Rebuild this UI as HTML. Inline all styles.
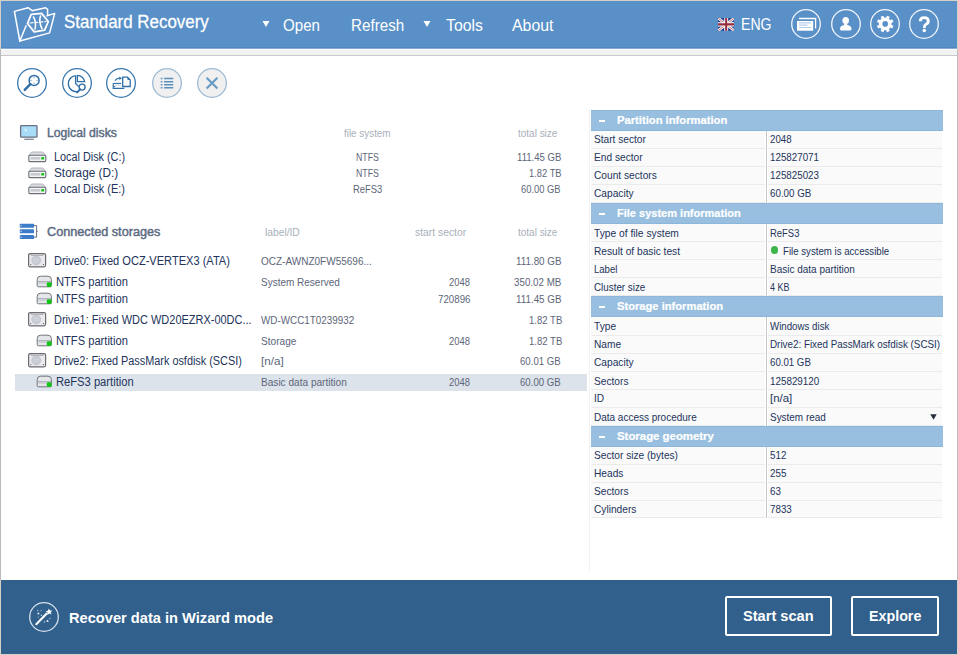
<!DOCTYPE html>
<html><head><meta charset="utf-8"><style>
html,body{margin:0;padding:0;width:958px;height:655px;overflow:hidden;background:#fff}
body{position:relative;font-family:"Liberation Sans", sans-serif}
.t{position:absolute;line-height:20px;white-space:nowrap}
.r{position:absolute}
</style></head><body>
<div class="r" style="left:0px;top:0px;width:958px;height:655px;background:#ffffff;"></div>
<div class="r" style="left:1px;top:1px;width:956px;height:46px;background:#5990c8;"></div>
<div class="r" style="left:1px;top:47px;width:956px;height:1px;background:#4d88c5;"></div>
<div class="r" style="left:1px;top:48px;width:956px;height:1px;background:#86acd8;"></div>
<div class="r" style="left:1px;top:49px;width:956px;height:1px;background:#ffffff;"></div>
<div class="r" style="left:1px;top:50px;width:956px;height:5px;background:#f2f2f2;"></div>
<div class="r" style="left:1px;top:55px;width:956px;height:1px;background:#c9c9c9;"></div>
<svg class="r" style="left:0;top:0" width="70" height="48" viewBox="0 0 70 48">
<g fill="none" stroke="#fff" stroke-width="1.5" stroke-linejoin="round" stroke-linecap="round">
<path d="M19.8 41 L14.4 11.4 L28.1 7.7 L32.2 10.7 L45.6 7.7 L47.6 9.4 L47.6 15.1"/>
<path d="M19.8 41 L26.1 25.8"/>
<path d="M19.8 41 L49.6 32.9 L54.7 13.4 L47 15.8"/>
<path d="M27.5 23.5 L31.2 14.4 L41.6 13.4 L48.3 21.5 L44.6 30.2 L34.2 31.9 Z" stroke-width="1.8"/>
<path d="M33.5 17 Q36.5 22 35 29" stroke-width="1.6"/>
<path d="M40.5 16 Q38.5 22 42 28.5" stroke-width="1.6"/>
<path d="M30 23 L46 21.5" stroke-width="1.2" stroke-dasharray="3 2"/>
</g></svg>
<div class="t" style="left:63.70px;top:13px;font-size:17.0px;color:#ffffff;transform:scale(0.9952,1.0500);transform-origin:0 15px;-webkit-text-stroke:0.25px #fff;">Standard Recovery</div>
<svg class="r" style="left:261.5px;top:19.5px" width="8" height="8" viewBox="0 0 8 8"><path d="M0.5 1 L7.5 1 L4 7 Z" fill="#fff"/></svg>
<div class="t" style="left:283.40px;top:16px;font-size:15.5px;color:#ffffff;transform:scale(0.9737,1.1000);transform-origin:0 15px;">Open</div>
<div class="t" style="left:351.30px;top:16px;font-size:15.5px;color:#ffffff;transform:scale(0.9796,1.1000);transform-origin:0 15px;">Refresh</div>
<svg class="r" style="left:423px;top:19.5px" width="8" height="8" viewBox="0 0 8 8"><path d="M0.5 1 L7.5 1 L4 7 Z" fill="#fff"/></svg>
<div class="t" style="left:445.80px;top:16px;font-size:15.5px;color:#ffffff;transform:scale(1.0194,1.1000);transform-origin:0 15px;">Tools</div>
<div class="t" style="left:511.70px;top:16px;font-size:15.5px;color:#ffffff;transform:scale(1.0244,1.1000);transform-origin:0 15px;">About</div>
<svg class="r" style="left:717.8px;top:17.8px" width="16.4" height="12.8" viewBox="0 0 16 12" preserveAspectRatio="none">
<rect width="16" height="12" fill="#213f8e"/>
<path d="M0 0 L16 12 M16 0 L0 12" stroke="#f4f0ee" stroke-width="2.6"/>
<path d="M0 0 L16 12 M16 0 L0 12" stroke="#c8707a" stroke-width="0.9"/>
<path d="M8 0 V12 M0 6 H16" stroke="#fff" stroke-width="3.8"/>
<path d="M8 0 V12 M0 6 H16" stroke="#952c3c" stroke-width="2"/>
</svg>
<div class="t" style="left:741.00px;top:15px;font-size:15.5px;color:#ffffff;transform:scale(0.9088,1.1000);transform-origin:0 15px;">ENG</div>
<svg class="r" style="left:790px;top:8px" width="32" height="32" viewBox="0 0 32 32"><circle cx="16" cy="16" r="14.3" fill="none" stroke="#f2f6fb" stroke-width="1.3"/><path d="M9 10.5 H25.6 V20.5" fill="none" stroke="#fff" stroke-width="1.3"/><rect x="7" y="13" width="16.2" height="9.7" fill="#fff"/><path d="M9 14.9 H21 M9 17.1 H17.5 M9 19.5 H21" stroke="#b5cfea" stroke-width="1.1"/></svg>
<svg class="r" style="left:830px;top:8px" width="32" height="32" viewBox="0 0 32 32"><circle cx="16" cy="16" r="14.3" fill="none" stroke="#f2f6fb" stroke-width="1.3"/><ellipse cx="15.7" cy="12.5" rx="3.3" ry="3.6" fill="#fff"/><path d="M14.2 15.5 H17.2 V17 Q21.5 17.5 21.5 21 Q21.5 22.5 20 22.5 H11.5 Q10 22.5 10 21 Q10 17.5 14.2 17 Z" fill="#fff"/></svg>
<svg class="r" style="left:869px;top:8px" width="32" height="32" viewBox="0 0 32 32"><circle cx="16" cy="16" r="14.3" fill="none" stroke="#f2f6fb" stroke-width="1.3"/><circle cx="16.2" cy="15.9" r="6.3" fill="#fff"/><rect x="14.7" y="7.6" width="3" height="16.6" transform="rotate(22.5 16.2 15.9)" fill="#fff"/><rect x="14.7" y="7.6" width="3" height="16.6" transform="rotate(67.5 16.2 15.9)" fill="#fff"/><rect x="14.7" y="7.6" width="3" height="16.6" transform="rotate(112.5 16.2 15.9)" fill="#fff"/><rect x="14.7" y="7.6" width="3" height="16.6" transform="rotate(157.5 16.2 15.9)" fill="#fff"/><circle cx="16.2" cy="15.9" r="2.8" fill="#5990c8"/></svg>
<svg class="r" style="left:908px;top:8px" width="32" height="32" viewBox="0 0 32 32"><circle cx="16" cy="16" r="14.3" fill="none" stroke="#f2f6fb" stroke-width="1.3"/><path d="M12.3 13.2 Q12.3 9.6 16.2 9.6 Q20.3 9.6 20.3 13 Q20.3 15.2 18 16.3 Q16.4 17.1 16.4 19.3 V20" fill="none" stroke="#fff" stroke-width="2.9"/><circle cx="16.3" cy="22.6" r="1.75" fill="#fff"/></svg>
<svg class="r" style="left:15.850000000000001px;top:67px" width="32" height="32" viewBox="0 0 32 32"><circle cx="16" cy="16" r="14.35" fill="none" stroke="#3a78ae" stroke-width="1.3"/><circle cx="18.1" cy="13.4" r="5" fill="none" stroke="#2f6ea7" stroke-width="1.5"/><path d="M14.3 17.2 L8.75 22.9" stroke="#2f6ea7" stroke-width="2.4" stroke-linecap="round"/><path d="M18.1 9.6 v1.6 M18.1 15.6 v1.6 M14.3 13.4 h1.6 M20.3 13.4 h1.6" stroke="#7ea7cc" stroke-width="0.9"/></svg>
<svg class="r" style="left:60.900000000000006px;top:66.9px" width="32" height="32" viewBox="0 0 32 32"><circle cx="16" cy="16" r="14.35" fill="none" stroke="#3a78ae" stroke-width="1.3"/><path d="M14.6 8.6 A8 8 0 1 0 16.2 24.7" fill="none" stroke="#2f6ea7" stroke-width="1.4"/><path d="M14.6 8.6 V16.5 L17.6 19.6" fill="none" stroke="#2f6ea7" stroke-width="1.3"/><path d="M16.4 8.4 V14.6 H23.6 A7.2 7.2 0 0 0 16.4 8.4 Z" fill="none" stroke="#2f6ea7" stroke-width="1.3"/><circle cx="21.1" cy="20.1" r="3" fill="none" stroke="#2f6ea7" stroke-width="1.4"/><path d="M19 22.3 L16.2 25.4" stroke="#2f6ea7" stroke-width="2" stroke-linecap="round"/></svg>
<svg class="r" style="left:105.4px;top:67px" width="32" height="32" viewBox="0 0 32 32"><circle cx="16" cy="16" r="14.35" fill="none" stroke="#3a78ae" stroke-width="1.3"/><path d="M17.7 10.2 H22.5 L25.2 12.9 V19.5 H17.7 Z" fill="none" stroke="#2f6ea7" stroke-width="1.3"/><path d="M22.5 10.2 V12.9 H25.2 Z" fill="#2f6ea7"/><path d="M10 13.6 Q11.5 11.3 14.8 11.2" fill="none" stroke="#2f6ea7" stroke-width="1.2"/><path d="M14.3 9.4 L17 11.2 L14.3 12.9 Z" fill="#2f6ea7"/><path d="M8.2 16.4 H16.2" stroke="#2f6ea7" stroke-width="1.1"/><path d="M10.5 18.2 H16" stroke="#8db3d6" stroke-width="1" stroke-dasharray="1.2 0.8"/><path d="M8.2 16.4 V21.4 H19.3" fill="none" stroke="#2f6ea7" stroke-width="1.2"/><path d="M8.8 18.6 L10.6 19.6 L8.8 20.6 Z" fill="#2f6ea7"/></svg>
<svg class="r" style="left:150.5px;top:66.9px" width="32" height="32" viewBox="0 0 32 32"><circle cx="16" cy="16" r="14.35" fill="#f0f0f0" stroke="#9dbad3" stroke-width="1.3"/><path d="M13.1 11.5 H22.25 M13.1 14.7 H22.25 M13.1 17.75 H22.25 M13.1 20.8 H22.25" stroke="#5a8fbc" stroke-width="1.6"/><path d="M9.75 11.5 H11.4 M9.75 14.7 H11.4 M9.75 17.75 H11.4 M9.75 20.8 H11.4" stroke="#5a8fbc" stroke-width="1.6"/></svg>
<svg class="r" style="left:195.5px;top:67px" width="32" height="32" viewBox="0 0 32 32"><circle cx="16" cy="16" r="14.35" fill="#f0f0f0" stroke="#9dbad3" stroke-width="1.3"/><path d="M10.6 10.8 L21.4 21.5 M21.4 10.8 L10.6 21.5" stroke="#6a9cc4" stroke-width="2.3"/></svg>
<svg class="r" style="left:19px;top:124px" width="20" height="17" viewBox="0 0 20 17">
<rect x="1.6" y="1.6" width="16.4" height="11.6" rx="0.8" fill="#a9dcf8" stroke="#6b7180" stroke-width="1.3"/>
<path d="M5.3 4.2 L8.3 6.6 L6.6 7 L7 8.6 Z" fill="#ffffff"/>
<rect x="5.3" y="14.6" width="9.6" height="1.4" fill="#8a909a"/>
</svg>
<div class="t" style="left:47.25px;top:123px;font-size:12.5px;color:#5b6b82;transform:scale(0.9764,1.0000);transform-origin:0 14px;-webkit-text-stroke:0.45px #5b6b82;">Logical disks</div>
<div class="t" style="left:344.40px;top:123px;font-size:11.0px;color:#a9b0ba;transform:scale(0.8962,1.0000);transform-origin:0 14px;">file system</div>
<div class="t" style="left:518.30px;top:123px;font-size:11.0px;color:#a9b0ba;transform:scale(0.9070,1.0000);transform-origin:0 14px;">total size</div>
<svg class="r" style="left:27.5px;top:150.5px" width="19" height="12" viewBox="0 0 19 12">
<path d="M3.6 1 H14.8 L17.8 4.4 H0.8 Z" fill="#dcdde2" stroke="#a3a7ad" stroke-width="0.8"/>
<rect x="0.8" y="4.2" width="17" height="6.4" rx="1" fill="#f3f3f5" stroke="#6c7077" stroke-width="1.1"/>
<rect x="2.6" y="6" width="9.6" height="2.6" fill="#c6cad1"/>
<rect x="13.2" y="6" width="3" height="2.5" fill="#1ec81e"/>
</svg>
<div class="t" style="left:53.80px;top:147px;font-size:12.0px;color:#23345c;transform:scale(0.9025,1.0000);transform-origin:0 14px;">Local Disk (C:)</div>
<div class="t" style="left:356.00px;top:147px;font-size:11.0px;color:#5d6679;transform:scale(0.8000,1.0000);transform-origin:0 14px;">NTFS</div>
<div class="t" style="left:516.50px;top:147px;font-size:11.0px;color:#5d6679;transform:scale(0.8725,1.0000);transform-origin:0 14px;">111.45 GB</div>
<svg class="r" style="left:27.5px;top:166.5px" width="19" height="12" viewBox="0 0 19 12">
<path d="M3.6 1 H14.8 L17.8 4.4 H0.8 Z" fill="#dcdde2" stroke="#a3a7ad" stroke-width="0.8"/>
<rect x="0.8" y="4.2" width="17" height="6.4" rx="1" fill="#f3f3f5" stroke="#6c7077" stroke-width="1.1"/>
<rect x="2.6" y="6" width="9.6" height="2.6" fill="#c6cad1"/>
<rect x="13.2" y="6" width="3" height="2.5" fill="#1ec81e"/>
</svg>
<div class="t" style="left:53.80px;top:163px;font-size:12.0px;color:#23345c;transform:scale(0.9815,1.0000);transform-origin:0 14px;">Storage (D:)</div>
<div class="t" style="left:356.00px;top:163px;font-size:11.0px;color:#5d6679;transform:scale(0.8000,1.0000);transform-origin:0 14px;">NTFS</div>
<div class="t" style="left:528.70px;top:163px;font-size:11.0px;color:#5d6679;transform:scale(0.8500,1.0000);transform-origin:0 14px;">1.82 TB</div>
<svg class="r" style="left:27.5px;top:182.5px" width="19" height="12" viewBox="0 0 19 12">
<path d="M3.6 1 H14.8 L17.8 4.4 H0.8 Z" fill="#dcdde2" stroke="#a3a7ad" stroke-width="0.8"/>
<rect x="0.8" y="4.2" width="17" height="6.4" rx="1" fill="#f3f3f5" stroke="#6c7077" stroke-width="1.1"/>
<rect x="2.6" y="6" width="9.6" height="2.6" fill="#c6cad1"/>
<rect x="13.2" y="6" width="3" height="2.5" fill="#1ec81e"/>
</svg>
<div class="t" style="left:53.80px;top:179px;font-size:12.0px;color:#23345c;transform:scale(0.9090,1.0000);transform-origin:0 14px;">Local Disk (E:)</div>
<div class="t" style="left:353.05px;top:179px;font-size:11.0px;color:#5d6679;transform:scale(0.8559,1.0000);transform-origin:0 14px;">ReFS3</div>
<div class="t" style="left:521.00px;top:179px;font-size:11.0px;color:#5d6679;transform:scale(0.8511,1.0000);transform-origin:0 14px;">60.00 GB</div>
<svg class="r" style="left:18px;top:222px" width="22" height="19" viewBox="0 0 22 19">
<rect x="1.75" y="1.75" width="14.3" height="4" rx="0.8" fill="#3d7cc8"/>
<rect x="1.75" y="7.3" width="14.3" height="4" rx="0.8" fill="#3d7cc8"/>
<rect x="1.75" y="13.1" width="14.3" height="3.9" rx="0.8" fill="#3d7cc8"/>
<path d="M2.6 3.75 h1 M2.6 9.3 h1 M2.6 15.05 h1" stroke="#e6f0fa" stroke-width="1.2"/>
<path d="M16 3.6 H18.6 V15.2 H16 M18.6 9.3 H19.8" fill="none" stroke="#6f6f80" stroke-width="1"/>
</svg>
<div class="t" style="left:47.00px;top:222px;font-size:12.5px;color:#5b6b82;transform:scale(1.0133,1.0000);transform-origin:0 14px;-webkit-text-stroke:0.45px #5b6b82;">Connected storages</div>
<div class="t" style="left:265.00px;top:222px;font-size:11.0px;color:#a9b0ba;transform:scale(0.9324,1.0000);transform-origin:0 14px;">label/ID</div>
<div class="t" style="left:415.00px;top:222px;font-size:11.0px;color:#a9b0ba;transform:scale(0.9400,1.0000);transform-origin:0 14px;">start sector</div>
<div class="t" style="left:518.30px;top:222px;font-size:11.0px;color:#a9b0ba;transform:scale(0.9070,1.0000);transform-origin:0 14px;">total size</div>
<div class="r" style="left:15px;top:374px;width:572px;height:17px;background:#dce3eb;"></div>
<div class="r" style="left:15px;top:375px;width:572px;height:1px;background:repeating-linear-gradient(90deg,#cdd6e0 0 1px,transparent 1px 4px)"></div>
<svg class="r" style="left:27px;top:252px" width="20" height="16" viewBox="0 0 20 16">
<rect x="1.6" y="1.6" width="17" height="13.2" rx="1.5" fill="#eaeaee" stroke="#6c6c70" stroke-width="1.2"/>
<path d="M4.2 2 V3.4 H16 V2" fill="none" stroke="#9a9aa0" stroke-width="0.8"/>
<circle cx="9.2" cy="8.4" r="4.5" fill="#c8ccd5" stroke="#b4b8c2" stroke-width="0.6"/>
<path d="M6.5 7.5 H12 M6.2 9.2 H12.2" stroke="#d8dbe2" stroke-width="0.6"/>
<circle cx="3.8" cy="12.6" r="0.6" fill="#555"/><circle cx="16.4" cy="12.6" r="0.6" fill="#555"/>
</svg>
<div class="t" style="left:53.50px;top:251px;font-size:12.0px;color:#23345c;transform:scale(0.9225,1.0000);transform-origin:0 14px;">Drive0: Fixed OCZ-VERTEX3 (ATA)</div>
<div class="t" style="left:261.40px;top:251px;font-size:11.0px;color:#5d6679;transform:scale(0.9098,1.0000);transform-origin:0 14px;">OCZ-AWNZ0FW55696...</div>
<div class="t" style="left:516.10px;top:251px;font-size:11.0px;color:#5d6679;transform:scale(0.8922,1.0000);transform-origin:0 14px;">111.80 GB</div>
<svg class="r" style="left:36px;top:275px" width="17" height="13" viewBox="0 0 17 13">
<path d="M1.2 4.6 Q1.2 1.2 4.6 1.2 H12 Q15.4 1.2 15.4 4.6 V10.6 Q15.4 11.8 14.2 11.8 H2.4 Q1.2 11.8 1.2 10.6 Z" fill="#e4e6ea" stroke="#72767c" stroke-width="1"/>
<path d="M1.6 6.6 H15" stroke="#9ca1a8" stroke-width="0.8"/>
<rect x="2.5" y="7.2" width="9" height="1.6" fill="#c8cbd1"/>
<rect x="10.8" y="7.3" width="4.8" height="4.6" rx="1.4" fill="#14c414"/>
</svg>
<div class="t" style="left:56.20px;top:272px;font-size:12.0px;color:#23345c;transform:scale(0.9286,1.0000);transform-origin:0 14px;">NTFS partition</div>
<div class="t" style="left:261.40px;top:272px;font-size:11.0px;color:#5d6679;transform:scale(0.9080,1.0000);transform-origin:0 14px;">System Reserved</div>
<div class="t" style="left:449.40px;top:272px;font-size:11.0px;color:#5d6679;transform:scale(0.8520,1.0000);transform-origin:0 14px;">2048</div>
<div class="t" style="left:514.40px;top:272px;font-size:11.0px;color:#5d6679;transform:scale(0.8906,1.0000);transform-origin:0 14px;">350.02 MB</div>
<svg class="r" style="left:36px;top:292px" width="17" height="13" viewBox="0 0 17 13">
<path d="M1.2 4.6 Q1.2 1.2 4.6 1.2 H12 Q15.4 1.2 15.4 4.6 V10.6 Q15.4 11.8 14.2 11.8 H2.4 Q1.2 11.8 1.2 10.6 Z" fill="#e4e6ea" stroke="#72767c" stroke-width="1"/>
<path d="M1.6 6.6 H15" stroke="#9ca1a8" stroke-width="0.8"/>
<rect x="2.5" y="7.2" width="9" height="1.6" fill="#c8cbd1"/>
<rect x="10.8" y="7.3" width="4.8" height="4.6" rx="1.4" fill="#14c414"/>
</svg>
<div class="t" style="left:56.20px;top:289px;font-size:12.0px;color:#23345c;transform:scale(0.9286,1.0000);transform-origin:0 14px;">NTFS partition</div>
<div class="t" style="left:438.00px;top:289px;font-size:11.0px;color:#5d6679;transform:scale(0.8838,1.0000);transform-origin:0 14px;">720896</div>
<div class="t" style="left:516.10px;top:289px;font-size:11.0px;color:#5d6679;transform:scale(0.8922,1.0000);transform-origin:0 14px;">111.45 GB</div>
<svg class="r" style="left:27px;top:311px" width="20" height="16" viewBox="0 0 20 16">
<rect x="1.6" y="1.6" width="17" height="13.2" rx="1.5" fill="#eaeaee" stroke="#6c6c70" stroke-width="1.2"/>
<path d="M4.2 2 V3.4 H16 V2" fill="none" stroke="#9a9aa0" stroke-width="0.8"/>
<circle cx="9.2" cy="8.4" r="4.5" fill="#c8ccd5" stroke="#b4b8c2" stroke-width="0.6"/>
<path d="M6.5 7.5 H12 M6.2 9.2 H12.2" stroke="#d8dbe2" stroke-width="0.6"/>
<circle cx="3.8" cy="12.6" r="0.6" fill="#555"/><circle cx="16.4" cy="12.6" r="0.6" fill="#555"/>
</svg>
<div class="t" style="left:53.50px;top:310px;font-size:12.0px;color:#23345c;transform:scale(0.9148,1.0000);transform-origin:0 14px;">Drive1: Fixed WDC WD20EZRX-00DC...</div>
<div class="t" style="left:261.40px;top:310px;font-size:11.0px;color:#5d6679;transform:scale(0.8971,1.0000);transform-origin:0 14px;">WD-WCC1T0239932</div>
<div class="t" style="left:528.60px;top:310px;font-size:11.0px;color:#5d6679;transform:scale(0.8684,1.0000);transform-origin:0 14px;">1.82 TB</div>
<svg class="r" style="left:36px;top:334px" width="17" height="13" viewBox="0 0 17 13">
<path d="M1.2 4.6 Q1.2 1.2 4.6 1.2 H12 Q15.4 1.2 15.4 4.6 V10.6 Q15.4 11.8 14.2 11.8 H2.4 Q1.2 11.8 1.2 10.6 Z" fill="#e4e6ea" stroke="#72767c" stroke-width="1"/>
<path d="M1.6 6.6 H15" stroke="#9ca1a8" stroke-width="0.8"/>
<rect x="2.5" y="7.2" width="9" height="1.6" fill="#c8cbd1"/>
<rect x="10.8" y="7.3" width="4.8" height="4.6" rx="1.4" fill="#14c414"/>
</svg>
<div class="t" style="left:56.20px;top:331px;font-size:12.0px;color:#23345c;transform:scale(0.9286,1.0000);transform-origin:0 14px;">NTFS partition</div>
<div class="t" style="left:261.40px;top:331px;font-size:11.0px;color:#5d6679;transform:scale(0.9179,1.0000);transform-origin:0 14px;">Storage</div>
<div class="t" style="left:449.40px;top:331px;font-size:11.0px;color:#5d6679;transform:scale(0.8520,1.0000);transform-origin:0 14px;">2048</div>
<div class="t" style="left:528.60px;top:331px;font-size:11.0px;color:#5d6679;transform:scale(0.8684,1.0000);transform-origin:0 14px;">1.82 TB</div>
<svg class="r" style="left:27px;top:352px" width="20" height="16" viewBox="0 0 20 16">
<rect x="1.6" y="1.6" width="17" height="13.2" rx="1.5" fill="#eaeaee" stroke="#6c6c70" stroke-width="1.2"/>
<path d="M4.2 2 V3.4 H16 V2" fill="none" stroke="#9a9aa0" stroke-width="0.8"/>
<circle cx="9.2" cy="8.4" r="4.5" fill="#c8ccd5" stroke="#b4b8c2" stroke-width="0.6"/>
<path d="M6.5 7.5 H12 M6.2 9.2 H12.2" stroke="#d8dbe2" stroke-width="0.6"/>
<circle cx="3.8" cy="12.6" r="0.6" fill="#555"/><circle cx="16.4" cy="12.6" r="0.6" fill="#555"/>
</svg>
<div class="t" style="left:53.50px;top:351px;font-size:12.0px;color:#23345c;transform:scale(0.9058,1.0000);transform-origin:0 14px;">Drive2: Fixed PassMark osfdisk (SCSI)</div>
<div class="t" style="left:261.40px;top:351px;font-size:11.0px;color:#5d6679;transform:scale(1.0619,1.0000);transform-origin:0 14px;">[n/a]</div>
<div class="t" style="left:520.40px;top:351px;font-size:11.0px;color:#5d6679;transform:scale(0.8766,1.0000);transform-origin:0 14px;">60.01 GB</div>
<svg class="r" style="left:36px;top:375px" width="17" height="13" viewBox="0 0 17 13">
<path d="M1.2 4.6 Q1.2 1.2 4.6 1.2 H12 Q15.4 1.2 15.4 4.6 V10.6 Q15.4 11.8 14.2 11.8 H2.4 Q1.2 11.8 1.2 10.6 Z" fill="#e4e6ea" stroke="#72767c" stroke-width="1"/>
<path d="M1.6 6.6 H15" stroke="#9ca1a8" stroke-width="0.8"/>
<rect x="2.5" y="7.2" width="9" height="1.6" fill="#c8cbd1"/>
<rect x="10.8" y="7.3" width="4.8" height="4.6" rx="1.4" fill="#14c414"/>
</svg>
<div class="t" style="left:56.20px;top:372px;font-size:12.0px;color:#23345c;transform:scale(0.9313,1.0000);transform-origin:0 14px;">ReFS3 partition</div>
<div class="t" style="left:261.40px;top:372px;font-size:11.0px;color:#5d6679;transform:scale(0.9170,1.0000);transform-origin:0 14px;">Basic data partition</div>
<div class="t" style="left:449.40px;top:372px;font-size:11.0px;color:#5d6679;transform:scale(0.8520,1.0000);transform-origin:0 14px;">2048</div>
<div class="t" style="left:520.40px;top:372px;font-size:11.0px;color:#5d6679;transform:scale(0.8766,1.0000);transform-origin:0 14px;">60.00 GB</div>
<div class="r" style="left:589px;top:110px;width:1px;height:461px;background:#f2f2f2;"></div>
<div class="r" style="left:591px;top:110px;width:352px;height:21px;background:#99bfe0;"></div>
<div class="r" style="left:591px;top:110px;width:352px;height:1px;background:#8cb6da;"></div>
<div class="r" style="left:591px;top:130px;width:352px;height:1px;background:#8cb6da;"></div>
<div class="r" style="left:599px;top:120px;width:6px;height:2px;background:#ffffff;"></div>
<div class="t" style="left:616.90px;top:110px;font-size:11.5px;color:#ffffff;font-weight:bold;transform:scale(0.9752,1.0000);transform-origin:0 14px;-webkit-text-stroke:0.2px #fff;">Partition information</div>
<div class="r" style="left:591px;top:131px;width:174px;height:17px;background:#fafafa;"></div>
<div class="r" style="left:768px;top:131px;width:174px;height:17px;background:#fafafa;"></div>
<div class="r" style="left:591px;top:148px;width:174px;height:1px;background:#ebebeb;"></div>
<div class="r" style="left:768px;top:148px;width:174px;height:1px;background:#ebebeb;"></div>
<div class="r" style="left:766px;top:131px;width:1px;height:18px;background:#c6c6c6;"></div>
<div class="t" style="left:593.70px;top:129px;font-size:11.0px;color:#23345c;transform:scale(0.9228,1.0000);transform-origin:0 14px;">Start sector</div>
<div class="t" style="left:770.10px;top:129px;font-size:11.0px;color:#23345c;transform:scale(0.8800,1.0000);transform-origin:0 14px;">2048</div>
<div class="r" style="left:591px;top:149px;width:174px;height:17px;background:#fafafa;"></div>
<div class="r" style="left:768px;top:149px;width:174px;height:17px;background:#fafafa;"></div>
<div class="r" style="left:591px;top:166px;width:174px;height:1px;background:#ebebeb;"></div>
<div class="r" style="left:768px;top:166px;width:174px;height:1px;background:#ebebeb;"></div>
<div class="r" style="left:766px;top:149px;width:1px;height:18px;background:#c6c6c6;"></div>
<div class="t" style="left:593.70px;top:147px;font-size:11.0px;color:#23345c;transform:scale(0.9250,1.0000);transform-origin:0 14px;">End sector</div>
<div class="t" style="left:770.10px;top:147px;font-size:11.0px;color:#23345c;transform:scale(0.8900,1.0000);transform-origin:0 14px;">125827071</div>
<div class="r" style="left:591px;top:167px;width:174px;height:17px;background:#fafafa;"></div>
<div class="r" style="left:768px;top:167px;width:174px;height:17px;background:#fafafa;"></div>
<div class="r" style="left:591px;top:184px;width:174px;height:1px;background:#ebebeb;"></div>
<div class="r" style="left:768px;top:184px;width:174px;height:1px;background:#ebebeb;"></div>
<div class="r" style="left:766px;top:167px;width:1px;height:18px;background:#c6c6c6;"></div>
<div class="t" style="left:593.70px;top:165px;font-size:11.0px;color:#23345c;transform:scale(0.9250,1.0000);transform-origin:0 14px;">Count sectors</div>
<div class="t" style="left:770.10px;top:165px;font-size:11.0px;color:#23345c;transform:scale(0.8900,1.0000);transform-origin:0 14px;">125825023</div>
<div class="r" style="left:591px;top:185px;width:174px;height:17px;background:#fafafa;"></div>
<div class="r" style="left:768px;top:185px;width:174px;height:17px;background:#fafafa;"></div>
<div class="r" style="left:591px;top:202px;width:174px;height:1px;background:#ebebeb;"></div>
<div class="r" style="left:768px;top:202px;width:174px;height:1px;background:#ebebeb;"></div>
<div class="r" style="left:766px;top:185px;width:1px;height:18px;background:#c6c6c6;"></div>
<div class="t" style="left:593.70px;top:183px;font-size:11.0px;color:#23345c;transform:scale(0.9250,1.0000);transform-origin:0 14px;">Capacity</div>
<div class="t" style="left:770.10px;top:183px;font-size:11.0px;color:#23345c;transform:scale(0.8900,1.0000);transform-origin:0 14px;">60.00 GB</div>
<div class="r" style="left:591px;top:203px;width:352px;height:21px;background:#99bfe0;"></div>
<div class="r" style="left:591px;top:203px;width:352px;height:1px;background:#8cb6da;"></div>
<div class="r" style="left:591px;top:223px;width:352px;height:1px;background:#8cb6da;"></div>
<div class="r" style="left:599px;top:213px;width:6px;height:2px;background:#ffffff;"></div>
<div class="t" style="left:616.90px;top:203px;font-size:11.5px;color:#ffffff;font-weight:bold;transform:scale(0.9581,1.0000);transform-origin:0 14px;-webkit-text-stroke:0.2px #fff;">File system information</div>
<div class="r" style="left:591px;top:224px;width:174px;height:17px;background:#fafafa;"></div>
<div class="r" style="left:768px;top:224px;width:174px;height:17px;background:#fafafa;"></div>
<div class="r" style="left:591px;top:241px;width:174px;height:1px;background:#ebebeb;"></div>
<div class="r" style="left:768px;top:241px;width:174px;height:1px;background:#ebebeb;"></div>
<div class="r" style="left:766px;top:224px;width:1px;height:18px;background:#c6c6c6;"></div>
<div class="t" style="left:593.70px;top:223px;font-size:11.0px;color:#23345c;transform:scale(0.9319,1.0000);transform-origin:0 14px;">Type of file system</div>
<div class="t" style="left:770.10px;top:223px;font-size:11.0px;color:#23345c;transform:scale(0.8588,1.0000);transform-origin:0 14px;">ReFS3</div>
<div class="r" style="left:591px;top:242px;width:174px;height:17px;background:#fafafa;"></div>
<div class="r" style="left:768px;top:242px;width:174px;height:17px;background:#fafafa;"></div>
<div class="r" style="left:591px;top:259px;width:174px;height:1px;background:#ebebeb;"></div>
<div class="r" style="left:768px;top:259px;width:174px;height:1px;background:#ebebeb;"></div>
<div class="r" style="left:766px;top:242px;width:1px;height:18px;background:#c6c6c6;"></div>
<div class="t" style="left:593.70px;top:241px;font-size:11.0px;color:#23345c;transform:scale(0.9258,1.0000);transform-origin:0 14px;">Result of basic test</div>
<div class="r" style="left:770.8px;top:246.2px;width:7.5px;height:7.5px;border-radius:50%;background:#3db54b"></div>
<div class="t" style="left:782.50px;top:241px;font-size:11.0px;color:#23345c;transform:scale(0.8777,1.0000);transform-origin:0 14px;">File system is accessible</div>
<div class="r" style="left:591px;top:260px;width:174px;height:17px;background:#fafafa;"></div>
<div class="r" style="left:768px;top:260px;width:174px;height:17px;background:#fafafa;"></div>
<div class="r" style="left:591px;top:277px;width:174px;height:1px;background:#ebebeb;"></div>
<div class="r" style="left:768px;top:277px;width:174px;height:1px;background:#ebebeb;"></div>
<div class="r" style="left:766px;top:260px;width:1px;height:18px;background:#c6c6c6;"></div>
<div class="t" style="left:593.70px;top:259px;font-size:11.0px;color:#23345c;transform:scale(0.8667,1.0000);transform-origin:0 14px;">Label</div>
<div class="t" style="left:770.10px;top:259px;font-size:11.0px;color:#23345c;transform:scale(0.9074,1.0000);transform-origin:0 14px;">Basic data partition</div>
<div class="r" style="left:591px;top:278px;width:174px;height:17px;background:#fafafa;"></div>
<div class="r" style="left:768px;top:278px;width:174px;height:17px;background:#fafafa;"></div>
<div class="r" style="left:591px;top:295px;width:174px;height:1px;background:#ebebeb;"></div>
<div class="r" style="left:768px;top:295px;width:174px;height:1px;background:#ebebeb;"></div>
<div class="r" style="left:766px;top:278px;width:1px;height:18px;background:#c6c6c6;"></div>
<div class="t" style="left:593.70px;top:277px;font-size:11.0px;color:#23345c;transform:scale(0.8930,1.0000);transform-origin:0 14px;">Cluster size</div>
<div class="t" style="left:770.10px;top:277px;font-size:11.0px;color:#23345c;transform:scale(0.8125,1.0000);transform-origin:0 14px;">4 KB</div>
<div class="r" style="left:591px;top:296px;width:352px;height:21px;background:#99bfe0;"></div>
<div class="r" style="left:591px;top:296px;width:352px;height:1px;background:#8cb6da;"></div>
<div class="r" style="left:591px;top:316px;width:352px;height:1px;background:#8cb6da;"></div>
<div class="r" style="left:599px;top:306px;width:6px;height:2px;background:#ffffff;"></div>
<div class="t" style="left:616.90px;top:296px;font-size:11.5px;color:#ffffff;font-weight:bold;transform:scale(0.9706,1.0000);transform-origin:0 14px;-webkit-text-stroke:0.2px #fff;">Storage information</div>
<div class="r" style="left:591px;top:317px;width:174px;height:18px;background:#fafafa;"></div>
<div class="r" style="left:768px;top:317px;width:174px;height:18px;background:#fafafa;"></div>
<div class="r" style="left:591px;top:335px;width:174px;height:1px;background:#ebebeb;"></div>
<div class="r" style="left:768px;top:335px;width:174px;height:1px;background:#ebebeb;"></div>
<div class="r" style="left:766px;top:317px;width:1px;height:19px;background:#c6c6c6;"></div>
<div class="t" style="left:593.70px;top:316px;font-size:11.0px;color:#23345c;transform:scale(0.9250,1.0000);transform-origin:0 14px;">Type</div>
<div class="t" style="left:770.10px;top:316px;font-size:11.0px;color:#23345c;transform:scale(0.8824,1.0000);transform-origin:0 14px;">Windows disk</div>
<div class="r" style="left:591px;top:336px;width:174px;height:17px;background:#fafafa;"></div>
<div class="r" style="left:768px;top:336px;width:174px;height:17px;background:#fafafa;"></div>
<div class="r" style="left:591px;top:353px;width:174px;height:1px;background:#ebebeb;"></div>
<div class="r" style="left:768px;top:353px;width:174px;height:1px;background:#ebebeb;"></div>
<div class="r" style="left:766px;top:336px;width:1px;height:18px;background:#c6c6c6;"></div>
<div class="t" style="left:593.70px;top:334px;font-size:11.0px;color:#23345c;transform:scale(0.9250,1.0000);transform-origin:0 14px;">Name</div>
<div class="t" style="left:770.10px;top:334px;font-size:11.0px;color:#23345c;transform:scale(0.8947,1.0000);transform-origin:0 14px;">Drive2: Fixed PassMark osfdisk (SCSI)</div>
<div class="r" style="left:591px;top:354px;width:174px;height:17px;background:#fafafa;"></div>
<div class="r" style="left:768px;top:354px;width:174px;height:17px;background:#fafafa;"></div>
<div class="r" style="left:591px;top:371px;width:174px;height:1px;background:#ebebeb;"></div>
<div class="r" style="left:768px;top:371px;width:174px;height:1px;background:#ebebeb;"></div>
<div class="r" style="left:766px;top:354px;width:1px;height:18px;background:#c6c6c6;"></div>
<div class="t" style="left:593.70px;top:352px;font-size:11.0px;color:#23345c;transform:scale(0.9250,1.0000);transform-origin:0 14px;">Capacity</div>
<div class="t" style="left:770.10px;top:352px;font-size:11.0px;color:#23345c;transform:scale(0.8787,1.0000);transform-origin:0 14px;">60.01 GB</div>
<div class="r" style="left:591px;top:372px;width:174px;height:17px;background:#fafafa;"></div>
<div class="r" style="left:768px;top:372px;width:174px;height:17px;background:#fafafa;"></div>
<div class="r" style="left:591px;top:389px;width:174px;height:1px;background:#ebebeb;"></div>
<div class="r" style="left:768px;top:389px;width:174px;height:1px;background:#ebebeb;"></div>
<div class="r" style="left:766px;top:372px;width:1px;height:18px;background:#c6c6c6;"></div>
<div class="t" style="left:593.70px;top:371px;font-size:11.0px;color:#23345c;transform:scale(0.9250,1.0000);transform-origin:0 14px;">Sectors</div>
<div class="t" style="left:770.10px;top:371px;font-size:11.0px;color:#23345c;transform:scale(0.8945,1.0000);transform-origin:0 14px;">125829120</div>
<div class="r" style="left:591px;top:390px;width:174px;height:17px;background:#fafafa;"></div>
<div class="r" style="left:768px;top:390px;width:174px;height:17px;background:#fafafa;"></div>
<div class="r" style="left:591px;top:407px;width:174px;height:1px;background:#ebebeb;"></div>
<div class="r" style="left:768px;top:407px;width:174px;height:1px;background:#ebebeb;"></div>
<div class="r" style="left:766px;top:390px;width:1px;height:18px;background:#c6c6c6;"></div>
<div class="t" style="left:593.70px;top:388px;font-size:11.0px;color:#23345c;transform:scale(0.9250,1.0000);transform-origin:0 14px;">ID</div>
<div class="t" style="left:770.10px;top:388px;font-size:11.0px;color:#23345c;transform:scale(1.0381,1.0000);transform-origin:0 14px;">[n/a]</div>
<div class="r" style="left:591px;top:408px;width:174px;height:17px;background:#fafafa;"></div>
<div class="r" style="left:768px;top:408px;width:174px;height:17px;background:#fafafa;"></div>
<div class="r" style="left:591px;top:425px;width:174px;height:1px;background:#ebebeb;"></div>
<div class="r" style="left:768px;top:425px;width:174px;height:1px;background:#ebebeb;"></div>
<div class="r" style="left:766px;top:408px;width:1px;height:18px;background:#c6c6c6;"></div>
<div class="t" style="left:593.70px;top:407px;font-size:11.0px;color:#23345c;transform:scale(0.9080,1.0000);transform-origin:0 14px;">Data access procedure</div>
<div class="t" style="left:770.10px;top:407px;font-size:11.0px;color:#23345c;transform:scale(0.9032,1.0000);transform-origin:0 14px;">System read</div>
<svg class="r" style="left:929.7px;top:414px" width="7" height="6" viewBox="0 0 7 6"><path d="M0.3 0.3 H6.7 L3.5 5.7 Z" fill="#262d3b"/></svg>
<div class="r" style="left:591px;top:426px;width:352px;height:21px;background:#99bfe0;"></div>
<div class="r" style="left:591px;top:426px;width:352px;height:1px;background:#8cb6da;"></div>
<div class="r" style="left:591px;top:446px;width:352px;height:1px;background:#8cb6da;"></div>
<div class="r" style="left:599px;top:436px;width:6px;height:2px;background:#ffffff;"></div>
<div class="t" style="left:616.90px;top:426px;font-size:11.5px;color:#ffffff;font-weight:bold;transform:scale(0.9908,1.0000);transform-origin:0 14px;-webkit-text-stroke:0.2px #fff;">Storage geometry</div>
<div class="r" style="left:591px;top:447px;width:174px;height:17px;background:#fafafa;"></div>
<div class="r" style="left:768px;top:447px;width:174px;height:17px;background:#fafafa;"></div>
<div class="r" style="left:591px;top:464px;width:174px;height:1px;background:#ebebeb;"></div>
<div class="r" style="left:768px;top:464px;width:174px;height:1px;background:#ebebeb;"></div>
<div class="r" style="left:766px;top:447px;width:1px;height:18px;background:#c6c6c6;"></div>
<div class="t" style="left:593.70px;top:445px;font-size:11.0px;color:#23345c;transform:scale(0.9220,1.0000);transform-origin:0 14px;">Sector size (bytes)</div>
<div class="t" style="left:770.10px;top:445px;font-size:11.0px;color:#23345c;transform:scale(0.8900,1.0000);transform-origin:0 14px;">512</div>
<div class="r" style="left:591px;top:465px;width:174px;height:17px;background:#fafafa;"></div>
<div class="r" style="left:768px;top:465px;width:174px;height:17px;background:#fafafa;"></div>
<div class="r" style="left:591px;top:482px;width:174px;height:1px;background:#ebebeb;"></div>
<div class="r" style="left:768px;top:482px;width:174px;height:1px;background:#ebebeb;"></div>
<div class="r" style="left:766px;top:465px;width:1px;height:18px;background:#c6c6c6;"></div>
<div class="t" style="left:593.70px;top:463px;font-size:11.0px;color:#23345c;transform:scale(0.9250,1.0000);transform-origin:0 14px;">Heads</div>
<div class="t" style="left:770.10px;top:463px;font-size:11.0px;color:#23345c;transform:scale(0.8900,1.0000);transform-origin:0 14px;">255</div>
<div class="r" style="left:591px;top:483px;width:174px;height:17px;background:#fafafa;"></div>
<div class="r" style="left:768px;top:483px;width:174px;height:17px;background:#fafafa;"></div>
<div class="r" style="left:591px;top:500px;width:174px;height:1px;background:#ebebeb;"></div>
<div class="r" style="left:768px;top:500px;width:174px;height:1px;background:#ebebeb;"></div>
<div class="r" style="left:766px;top:483px;width:1px;height:18px;background:#c6c6c6;"></div>
<div class="t" style="left:593.70px;top:481px;font-size:11.0px;color:#23345c;transform:scale(0.9250,1.0000);transform-origin:0 14px;">Sectors</div>
<div class="t" style="left:770.10px;top:481px;font-size:11.0px;color:#23345c;transform:scale(0.8900,1.0000);transform-origin:0 14px;">63</div>
<div class="r" style="left:591px;top:501px;width:174px;height:16px;background:#fafafa;"></div>
<div class="r" style="left:768px;top:501px;width:174px;height:16px;background:#fafafa;"></div>
<div class="r" style="left:591px;top:517px;width:174px;height:1px;background:#ebebeb;"></div>
<div class="r" style="left:768px;top:517px;width:174px;height:1px;background:#ebebeb;"></div>
<div class="r" style="left:766px;top:501px;width:1px;height:17px;background:#c6c6c6;"></div>
<div class="t" style="left:593.70px;top:499px;font-size:11.0px;color:#23345c;transform:scale(0.9250,1.0000);transform-origin:0 14px;">Cylinders</div>
<div class="t" style="left:770.10px;top:499px;font-size:11.0px;color:#23345c;transform:scale(0.8900,1.0000);transform-origin:0 14px;">7833</div>
<div class="r" style="left:1px;top:580px;width:956px;height:74px;background:#30608b;"></div>
<svg class="r" style="left:28px;top:601px" width="33" height="33" viewBox="0 0 33 33">
<circle cx="16" cy="16" r="14.3" fill="none" stroke="#d6e0ea" stroke-width="1.3"/>
<path d="M8.3 23.2 L18.5 12.7" stroke="#fff" stroke-width="2.1" stroke-linecap="round"/>
<path d="M20.8 7.4 L21.9 9.6 L24.3 9.5 L22.7 11.2 L23.6 13.5 L21.3 12.6 L19.4 14.1 L19.6 11.6 L17.6 10.2 L20 9.7 Z" fill="#fff"/>
<circle cx="10.4" cy="12.5" r="1" fill="#dfe8f1"/><circle cx="13.4" cy="14.2" r="0.7" fill="#cfdbe7"/><circle cx="19.5" cy="20" r="1.1" fill="#dfe8f1"/><circle cx="16.4" cy="20.9" r="0.7" fill="#cfdbe7"/><circle cx="10.4" cy="16" r="0.6" fill="#b9cadb"/><circle cx="13" cy="9.6" r="0.6" fill="#b9cadb"/><circle cx="9.7" cy="9.4" r="0.6" fill="#b9cadb"/><circle cx="22" cy="17.5" r="0.7" fill="#b9cadb"/>
</svg>
<div class="t" style="left:68.80px;top:608px;font-size:14.6px;color:#ffffff;font-weight:bold;transform:scale(1.0030,1.0000);transform-origin:0 15px;">Recover data in Wizard mode</div>
<div class="r" style="left:725px;top:596px;width:103px;height:36px;border:2px solid #fff;border-radius:2px"></div>
<div class="t" style="left:743.00px;top:606px;font-size:14.6px;color:#ffffff;font-weight:bold;">Start scan</div>
<div class="r" style="left:851px;top:596px;width:84px;height:36px;border:2px solid #fff;border-radius:2px"></div>
<div class="t" style="left:868.70px;top:606px;font-size:14.6px;color:#ffffff;font-weight:bold;transform:scale(0.9778,1.0000);transform-origin:0 15px;">Explore</div>
<div class="r" style="left:0px;top:0px;width:958px;height:1px;background:#d4d0c8;"></div>
<div class="r" style="left:0px;top:654px;width:958px;height:1px;background:#d4d0c8;"></div>
<div class="r" style="left:0px;top:0px;width:1px;height:49px;background:#d4d0c8;"></div>
<div class="r" style="left:957px;top:0px;width:1px;height:49px;background:#d4d0c8;"></div>
<div class="r" style="left:0px;top:49px;width:1px;height:531px;background:#bababa;"></div>
<div class="r" style="left:957px;top:49px;width:1px;height:531px;background:#bcbcbc;"></div>
<div class="r" style="left:0px;top:580px;width:1px;height:75px;background:#d4d0c8;"></div>
<div class="r" style="left:957px;top:580px;width:1px;height:75px;background:#d4d0c8;"></div>
</body></html>
